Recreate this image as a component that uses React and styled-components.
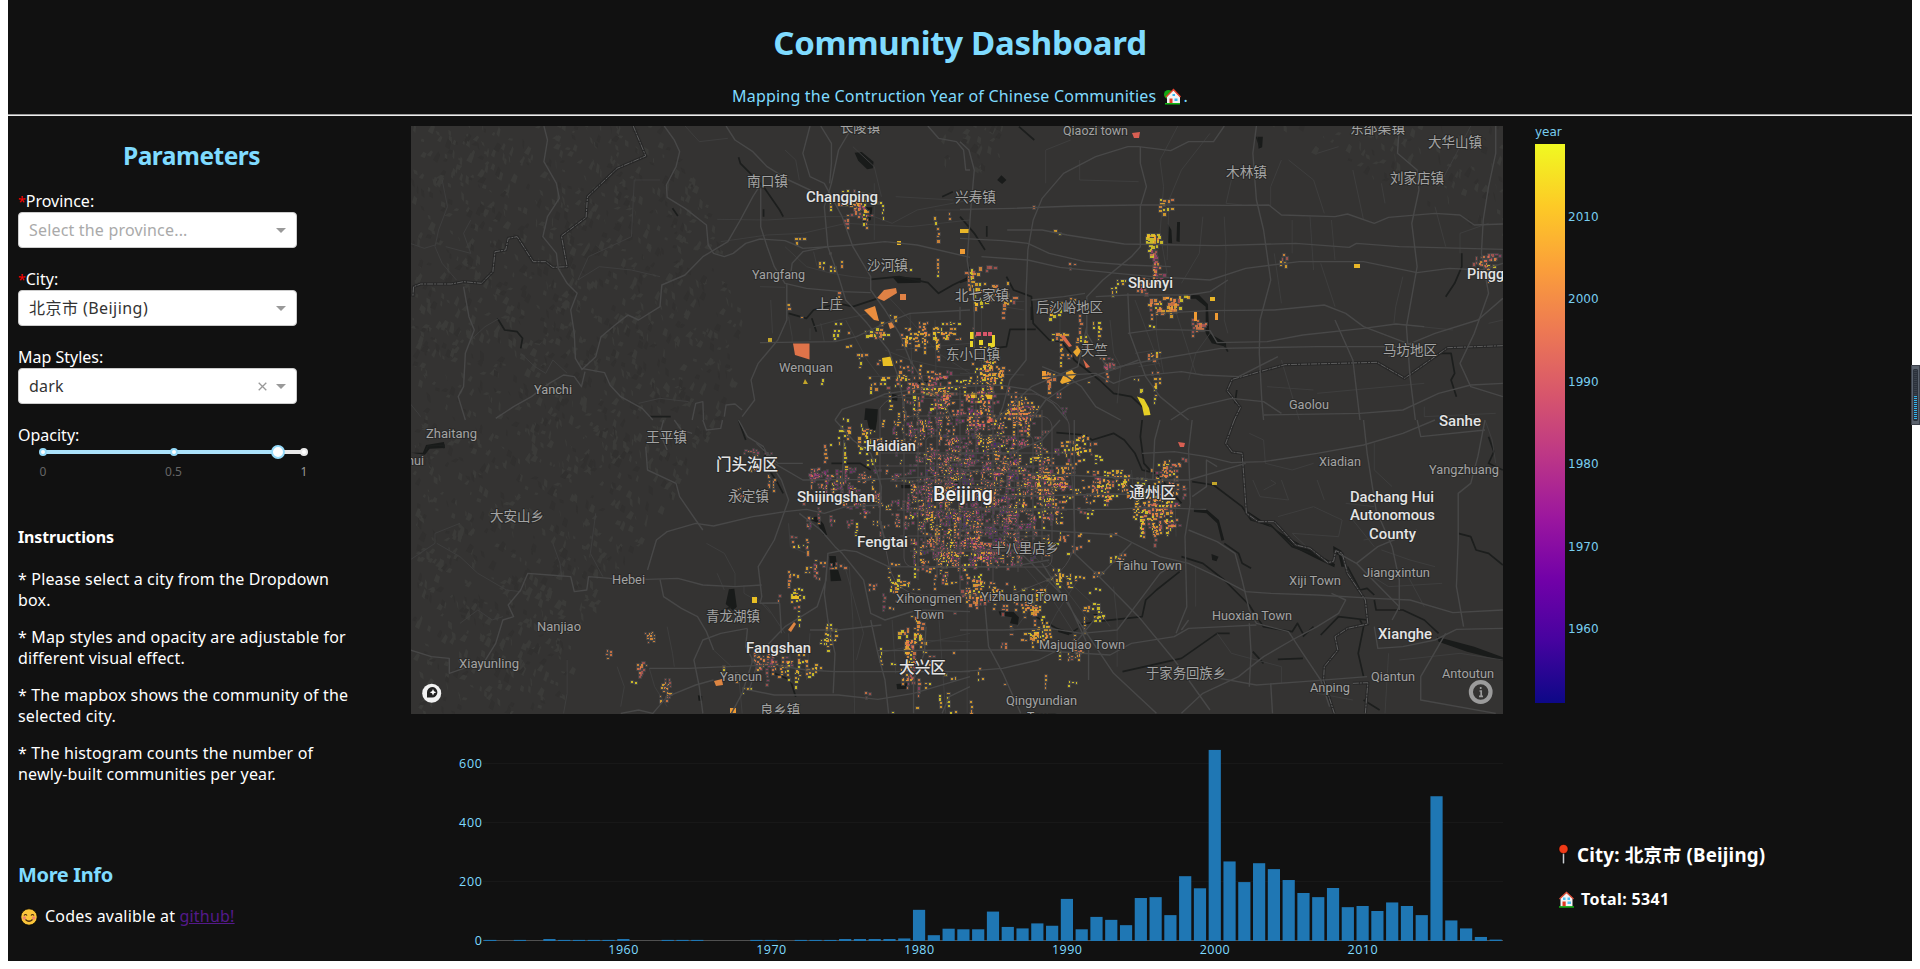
import React from "react";
import styled, { createGlobalStyle } from "styled-components";

const UI_FONT = '"Noto Sans", "Open Sans", "Noto Sans CJK SC", sans-serif';
const ACCENT = "#7fdbff";

const GlobalStyle = createGlobalStyle`
  *, *::before, *::after { box-sizing: border-box; }
  html, body { margin: 0; padding: 0; background: #fff; overflow: hidden; }
  body { font-family: ${UI_FONT}; font-size: 16px; line-height: 21px; color: #fff; }
  h1, h2, h3, h4, p { margin: 0; white-space: nowrap; }
`;

/* ---------- layout ---------- */
const Page = styled.div`
  position: relative;
  width: 1920px;
  height: 969px;
  padding: 0 8px 8px;
  background: #fff;
`;
const Board = styled.div`
  height: 961px;
  display: flex;
  flex-direction: column;
  background: #111;
`;
const Header = styled.header`
  height: 116px;
  flex: none;
  display: flex;
  flex-direction: column;
  align-items: center;
  padding-top: 21px;
  border-bottom: 1px solid #eee;
  box-shadow: inset 0 -1px 0 #9a9a9a;
  color: ${ACCENT};
`;
const Title = styled.h1`
  font-size: 33px;
  line-height: 43px;
  letter-spacing: -0.28px;
`;
const Subtitle = styled.p`
  display: flex;
  align-items: center;
  margin-top: 22px;
  letter-spacing: 0.21px;
  svg { margin: 0 2px 0 8px; }
`;
const Body = styled.main`
  flex: 1;
  display: grid;
  grid-template-columns: 403px 1092px 1fr;
`;
const Sidebar = styled.aside`
  padding: 24px 46px 0 10px;
  display: flex;
  flex-direction: column;
`;
const Center = styled.section`
  padding-top: 10px;
`;
const Right = styled.section`
  padding: 8px 0 0 32px;
  display: flex;
  flex-direction: column;
`;

/* ---------- sidebar ---------- */
const PanelTitle = styled.h2`
  font-size: 24.500px;
  line-height: 32px;
  text-align: center;
  color: ${ACCENT};
  letter-spacing: -0.500px;
`;
const Field = styled.div`
  margin-top: ${(p) => p.$top || 21}px;
`;
const Label = styled.div`
  line-height: 21px;
`;
const Required = styled.span`
  color: #f00;
  font-size: 14px;
`;
const Select = styled.div`
  width: 279px;
  height: 36px;
  display: flex;
  align-items: center;
  padding: 0 10px;
  border: 1px solid #ccc;
  border-radius: 4px;
  background: #fff;
  color: ${(p) => (p.$placeholder ? "#aaa" : "#333")};
  line-height: 34px;
`;
const SelectValue = styled.span`
  flex: 1;
  letter-spacing: ${(p) => p.$ls || 0.180}px;
`;
const Clear = styled.svg`
  width: 9px;
  height: 9px;
  margin-right: 9px;
`;
const Caret = styled.span`
  border: 5px solid transparent;
  border-top-color: #999;
  border-bottom-width: 0;
`;
const Slider = styled.svg`
  display: block;
  width: 310px;
  height: 40px;
  margin-top: -2px;
`;
const Subheading = styled.h4`
  margin-top: 43px;
  font-size: 16px;
  letter-spacing: -0.150px;
`;
const Para = styled.p`
  margin-top: ${(p) => p.$top || 16}px;
  letter-spacing: 0.160px;
`;
const InfoTitle = styled.h3`
  margin-top: 77px;
  font-size: 20px;
  line-height: 26px;
  color: ${ACCENT};
  letter-spacing: -0.350px;
`;
const Inline = styled.p`
  display: flex;
  align-items: center;
  margin-top: 18px;
  white-space: pre;
  letter-spacing: 0.200px;
  svg { margin: 0 7px 0 2px; }
`;
const Link = styled.a`
  color: #551a8b;
  text-decoration: underline;
`;

/* ---------- map and charts ---------- */
const MapView = styled.svg`
  display: block;
  width: 1092px;
  height: 588px;
  background: #343332;
`;
const Chart = styled.svg`
  display: block;
  width: 1092px;
  height: 247px;
`;
const Legend = styled.div`
  width: 30px;
  font: 12px/16px "DejaVu Sans", sans-serif;
  color: #78cdef;
`;
const LegendRow = styled.div`
  display: flex;
  margin-top: 4px;
`;
const Ramp = styled.div`
  flex: none;
  width: 30px;
  height: 559px;
  background: linear-gradient(to top, #0d0887 0%, #46039f 11.1%, #7201a8 22.2%, #9c179e 33.3%,
    #bd3786 44.4%, #d8576b 55.6%, #ed7953 66.7%, #fb9f3a 77.8%, #fdca26 88.9%, #f0f921 100%);
`;
const Ticks = styled.div`
  display: flex;
  flex-direction: column;
  gap: 66.400px;
  padding: 65px 0 0 3px;
  font-size: 12px;
`;
const Stats = styled.div`
  padding: 139px 0 0 23px;
  font-weight: 700;
`;
const Stat = styled.div`
  display: flex;
  align-items: center;
  height: 25px;
  margin-bottom: 20px;
  font-size: ${(p) => p.$size}px;
  letter-spacing: ${(p) => p.$ls || 0}px;
  white-space: nowrap;
  svg { margin-right: ${(p) => p.$gap}px; }
`;
const SideWidget = styled.div`
  position: absolute;
  right: 0;
  top: 365px;
  width: 9px;
  height: 60px;
  padding: 3px 1px;
  border: 1px solid #3c414b;
  background: #5a626d;
`;
const Meter = styled.div`
  height: 100%;
  border-radius: 1px;
  border: 1px solid #2c323c;
  background: repeating-linear-gradient(#0000 0 1px, #2c323c 1px 2px),
    linear-gradient(#3b424c 50%, #33b4ea 50%);
`;

/* ---------- icons ---------- */
const House = () => (
  <svg width="17" height="17" viewBox="0 0 17 17">
    <circle cx="4.5" cy="6.5" r="4.5" fill="#16a813" />
    <path d="M3 8.5 9.5 2 16 8.5V15.5H3Z" fill="#f2f2f2" />
    <path d="M2 9 9.5 1.5 16.5 9" fill="none" stroke="#e8412c" strokeWidth="1.4" />
    <path d="M5.5 10.5h3V15.500h-3z" fill="#e33a24" />
    <path d="M10.500 10.500h3v2.500h-3zM8.500 6h2.500v2h-2.500z" fill="#38b6ee" />
    <path d="M1 15h15v1.500H1z" fill="#14b815" />
  </svg>
);
const FrontHouse = () => (
  <svg width="17" height="17" viewBox="0 0 17 17">
    <path d="M2.500 7.500 8.500 2 14.500 7.500V15.500h-12Z" fill="#f4f4f4" />
    <path d="M1.500 8 8.500 1.300 15.500 8" fill="none" stroke="#e8553f" strokeWidth="1.300" />
    <path d="M4.500 10.500h3.200V15.500H4.500z" fill="#e33a24" />
    <path d="M9.500 10.500h3.500V13H9.500zM5 6.500h2.500V9H5zM9.500 6.500H12V9H9.500z" fill="#4fc3f3" />
    <path d="M1 15.200h15v1.500H1z" fill="#14b815" />
  </svg>
);
const Pin = () => (
  <svg width="11" height="22" viewBox="0 0 11 22">
    <path d="M5.500 8V20" stroke="#000" strokeWidth="3.500" />
    <path d="M5.500 8V19.500" stroke="#c9ced2" strokeWidth="1.600" />
    <circle cx="5.500" cy="5" r="4.600" fill="#f03a17" stroke="#000" strokeWidth=".6" />
  </svg>
);
const Smile = () => (
  <svg width="18" height="18" viewBox="0 0 18 18">
    <circle cx="9" cy="9" r="8.200" fill="#fbc53a" stroke="#000" strokeWidth=".8" />
    <circle cx="4.300" cy="10" r="1.700" fill="#f3866a" />
    <circle cx="13.700" cy="10" r="1.700" fill="#f3866a" />
    <path d="M4 7.500q1.500-2 3 0M11 7.500q1.500-2 3 0M5.500 11.500q3.500 3.500 7 0" fill="none" stroke="#4a2a10" strokeWidth="1.200" />
  </svg>
);

/* ---------- map data ---------- */
// The map is drawn as four tiles; every tile stores its lines in tile units.
const TILES = [
  {
    at: [410, 120],
    major: [
      "M712 18 740 60 755 95 745 140 718 195 720 232 770 265 830 315 835 375 850 400 880 410 905 400 940 370 980 357 1050 362 1080 375 1100 385 1240 375 1330 365 1420 375 1568 412",
      "M375 18 385 60 375 125 410 190 418 235 385 290 372 350 410 400 415 445 440 490 468 520 450 570 460 640 463 715 480 745 545 758 560 795 590 830 650 865 680 900",
      "M480 750 520 710 535 650 580 610 610 585 640 600 700 560 705 495 770 465 820 410 890 365 925 300 960 230 978 200",
      "M982 205 982 320 1000 380 1020 440 1050 490 1110 505 1210 515 1290 518",
      "M1055 490 1055 600 1030 660 975 730 955 780 965 840 930 890",
      "M980 668 1190 665 1250 650 1330 610 1400 580 1568 570",
      "M1120 18 1100 100 1120 170 1160 190 1210 290 1240 380 1290 470 1290 510 1330 570 1370 640 1400 720 1440 790 1500 860 1520 900",
      "M885 18 910 60 960 95 1000 140 1060 180 1120 210 1160 240",
      "M1150 18 1180 70 1180 130 1175 190M1240 18 1200 90 1180 190 1160 260 1170 380 1200 470 1220 540 1280 610 1340 690 1370 780 1390 900",
      "M1065 470 1070 430 1100 395 1170 380",
      "M1568 798 1460 800 1390 812 1330 822 1290 840 1210 868 1190 900",
      "M240 895 290 860 340 830 390 790 430 765 460 770 480 800 490 755",
      "M150 500 165 590 180 630 155 700 150 800 135 830 155 900",
      "M790 900 800 850 820 845 822 900M880 890 885 855 910 852 930 870",
      "M1450 18 1480 55 1530 65 1550 90 1556 150 1568 150",
    ],
    minor: [
      "M90 180 105 260 80 330 70 380 90 430 130 480M0 370 40 385 70 375",
      "M470 480 500 410 560 380 620 350 628 180 700 180M470 480 530 440 620 450 700 470",
      "M170 300 150 340 170 400 100 380M0 160 0 150",
      "M170 660 210 620 250 595M310 700 350 740 380 760 400 720 440 760",
      "M860 298 1000 300 1160 290 1300 290 1350 310 1420 270 1568 240",
      "M870 365 1000 345 1100 340 1220 310 1400 320 1568 300",
      "M980 500 1050 502M1010 540 1015 640M1120 625 1120 660M1150 610 1160 665",
      "M1060 590 1070 650 1070 668M1130 620 1200 600 1290 580",
      "M1220 600 1280 720 1330 790M1330 690 1400 720 1480 740 1568 750",
      "M1050 380 1110 440 1180 460 1240 470 1290 475M1130 395 1140 440",
      "M1050 90 1080 120 1090 180M1240 80 1300 140 1320 230M770 18 810 65 890 55",
      "M1300 190 1300 360M1360 230 1520 240M1470 270 1568 270",
      "M1330 520 1400 600 1480 700 1568 760M1400 580 1410 900M1470 600 1475 900",
      "M640 850 700 835 780 845M0 850 30 890",
      "M1280 770 1568 765M1310 830 1568 840M1360 690 1568 670",
    ],
    water: [
      "M920 112 925 130 990 200 1035 270 1045 290M990 268 990 290M735 265 750 288",
      "M1290 478 1370 470 1450 488 1480 520 1520 495 1568 470",
      "M1060 580 1110 595 1130 570 1200 550 1240 560 1310 535M1125 595 1138 635",
      "M245 595 265 630 300 635 315 655 310 685M1420 790 1510 775M670 890 730 890",
      "M1490 230 1520 215",
    ],
    lakes: [
      "M1245 98 1265 96 1298 125 1296 145 1280 148 1255 122Z",
      "M1272 262 1295 262 1290 300 1268 308Z",
      "M1350 470 1430 474 1430 488 1366 490Z",
      "M1275 865 1310 868 1308 900 1272 900Z",
      "M1350 822 1366 825 1364 842 1350 840Z",
    ],
    border: ["M625 18 660 108 580 145 497 230 493 292 424 348 440 440 400 442 380 425 345 425 300 350 275 355 268 390 238 395 232 455 200 490 150 485 115 492 30 492 10 500 8 530"],
  },
  {
    at: [960, 120],
    major: [
      "M0 268 150 265 320 258 500 255 590 255 750 256 865 255 900 285 1050 290 1085 282 1160 310 1200 292 1330 280 1400 285 1440 315 1520 312",
      "M132 330 230 330 300 345 460 372 720 377 940 370 1090 382 1110 370 1230 380 1520 388",
      "M0 355 120 362 190 370 250 400 350 425 470 435 590 440",
      "M60 410 190 420 280 442 440 460 540 470 700 480 800 445 950 425 1130 425 1280 458 1370 445 1460 450 1520 430",
      "M740 18 710 65 640 65 590 92 500 80 470 80 380 110 290 160 230 235 205 300 190 390 185 520 185 720 140 780 120 860 105 900",
      "M505 80 505 130 522 200 505 260 505 380 480 410 400 480 355 530 355 640 410 740",
      "M830 18 820 100 830 240 850 330 870 480 840 600 838 700 845 840 850 900",
      "M0 600 0 560M380 530 470 525 640 525 700 515 750 480",
      "M470 640 550 628 700 632 720 668 860 665 960 645 1130 625 1220 612 1300 620",
      "M200 540 290 530 350 520M545 580 700 572 880 570 1020 555 1080 580 1130 620 1240 665 1300 690",
      "M1520 535 1450 600 1330 640 1240 680 1200 710M890 710 780 770 680 765 620 755 480 770 430 790 380 760 230 770",
      "M420 745 540 720 730 685 1000 680 1240 680",
      "M1230 18 1225 100 1280 150 1285 210 1265 310 1280 440 1250 620 1260 770 1275 900",
      "M1500 18 1500 100 1480 200 1465 300 1460 400 1480 520 1440 640 1400 730 1430 800 1520 830",
      "M1050 600 1100 720 1120 900M0 800 110 795 200 810 260 850 300 900",
      "M1520 790 1430 795 1340 820 1240 870 1120 880 850 885M590 900 640 865 760 835 850 845 900 880",
      "M470 520 475 640 520 770 560 830 640 900M0 65 25 90 40 150 30 270 20 420 40 560 40 700",
      "M100 900 200 800 330 740 355 620M450 900 380 860 340 800 300 770 230 740",
      "M200 900 240 840 310 790 440 745 500 720",
    ],
    minor: [
      "M240 190 240 90 310 60M335 120 335 180 500 185M900 120 870 200 870 260",
      "M610 18 560 120 570 200 560 340 580 460M700 40 620 150 585 240 580 420M550 560 550 640 570 760",
      "M680 290 670 400 620 490M760 180 745 250 790 255M740 290 745 400 740 600 750 640",
      "M980 290 990 450M930 300 930 400M1040 300 1050 420M880 400 900 550M1010 430 1050 560",
      "M920 120 990 180 1020 280M1060 80 1000 100M1100 150 1130 300M1330 260 1360 380",
      "M1240 470 1220 560 1215 610M1220 612 1380 630M1400 400 1400 340 1480 310",
      "M640 780 660 700 700 640M540 720 560 770M600 560 660 760M490 540 560 740",
      "M1000 820 1300 790M900 720 950 900M860 800 990 810M1300 860 1300 890 1500 880",
      "M280 560 280 640M420 600 430 700 450 740 440 850M490 700 550 690M500 740 560 730",
      "M0 700 100 700M60 560 60 800M0 760 180 765M0 540 180 545M100 500 120 560 180 570",
      "M1430 18 1390 100 1340 200M1520 600 1480 610M1180 190 1190 250",
    ],
    water: [
      "M0 290 40 340 70 390M75 318 75 350M130 470 150 510 200 530 205 610 250 660 285 665 310 700 320 720 390 780 430 820 480 830 520 870",
      "M165 20 208 60M830 50 840 80M200 600 200 560M212 628 140 628 130 680 90 685",
      "M1405 400 1405 440 1385 490 1360 530M1340 700 1375 700 1385 760 1375 780 1390 830",
      "M740 675 750 695M775 810 770 850M0 487 20 480 25 440",
    ],
    lakes: [
      "M622 524 670 526 694 552 698 640 745 668 745 680 705 670 688 640 688 560 660 536 630 536Z",
      "M582 312 592 330 594 370 580 368ZM608 306 616 306 615 366 606 364Z",
      "M104 180 116 166 130 180 118 192ZM834 50 848 50 846 82 836 86Z",
    ],
    border: ["M1520 677 1365 683 1245 775 1168 727 910 734 762 778 748 812 785 862 768 900"],
  },
  {
    at: [410, 420],
    major: [
      "M0 690 60 710 110 715 110 760 150 745 200 740 240 670 260 600 290 590 275 555 310 510 330 460 390 465 450 470 460 515 495 510 500 470 560 475 665 478 750 475 820 495 910 500 985 495",
      "M665 450 690 360 720 335 800 310 850 318 960 290 1050 275 1110 268 1160 280 1220 260 1320 255",
      "M700 478 710 530 760 565 805 590 830 635 850 690",
      "M660 80 665 150 745 190 755 230 800 300 820 330",
      "M920 0 945 50 990 80 1010 130 1040 180 1060 240 1045 285 1020 360 975 440 985 530 980 550 1035 550 1040 640",
      "M945 625 870 640 820 660 795 720 810 800 820 880M945 625 940 680 970 740 950 810 1020 825 1200 825 1310 838 1410 820 1568 770",
      "M980 550 1035 548M1090 280 1150 330 1190 380 1210 400 1270 480 1290 580 1330 600 1420 570 1568 575",
      "M1170 410 1160 520 1170 600 1190 700 1185 820M1215 390 1170 400 1165 480 1140 560 1050 620 960 720 930 820 900 880",
      "M1020 130 1100 180 1300 178 1568 165M970 70 1030 130 1100 130",
      "M1290 600 1310 700 1330 780 1340 880M1120 630 1200 630 1320 615",
      "M670 745 780 745 890 740 1020 735 1110 750 1190 755 1568 755",
      "M590 880 640 870 680 880 720 830 800 795 850 780M1568 690 1310 692",
      "M1190 0 1240 60 1290 100 1320 200 1315 300 1330 360M1568 442 1340 440 1250 395 1215 390",
      "M1205 250 1210 200 1215 60M1490 880 1510 830 1568 800M820 0 830 30 870 25 875 0",
      "M710 0 700 40 720 90M740 0 760 30 790 40M1410 880 1410 780 1440 700 1445 620",
    ],
    minor: [
      "M0 420 70 370 70 340 140 310M75 370 140 410 190 460 270 510 310 515",
      "M520 280 505 400 540 470M400 370 420 430 425 470M140 610 190 570 230 600 260 590",
      "M830 370 880 400 910 460 910 500M880 510 860 460M935 495 935 520 1000 560 1050 640",
      "M670 745 685 800 720 860M720 620 735 700 740 740M1060 640 1065 740 1100 760",
      "M850 690 900 740M580 740 600 800 590 860M440 720 440 820 430 880",
      "M1060 310 1065 380 1110 400M1230 440 1240 600 1245 880M1215 430 1270 640 1250 720",
      "M1000 680 1040 700 1070 790M1120 640 1110 780M920 760 930 880M960 520 1010 580",
      "M1310 700 1568 640M1350 600 1360 760M1480 580 1500 880M1400 660 1568 665",
    ],
    water: [
      "M990 80 1000 140 1030 190 1045 220M920 0 940 60M1180 130 1260 130 1290 150",
      "M1010 755 1065 780 1080 830M45 90 50 78 95 75 95 85M870 575 900 560",
    ],
    lakes: [
      "M1120 292 1140 290 1158 312 1168 345 1158 345 1140 308 1122 300Z",
      "M1174 408 1192 408 1196 440 1208 482 1178 484Z",
      "M893 508 908 506 915 560 905 572 884 552Z",
      "M1280 0 1308 0 1302 40 1286 30Z",
      "M1375 195 1405 195 1400 205 1376 205ZM1362 792 1392 790 1390 806 1364 808ZM1448 355 1478 352 1478 366 1450 368ZM806 826 818 828 818 842 808 842ZM1522 156 1536 156 1536 178 1532 200 1524 198Z",
      "M0 98 36 98 45 75 95 66 98 84 55 86 42 104Z",
    ],
    border: [],
  },
  {
    at: [960, 420],
    major: [
      "M0 330 220 330 440 345 560 410 640 430 720 470 800 515 870 520 1000 525 1160 535 1260 540 1380 578 1520 570",
      "M0 265 320 268 440 268 520 262 690 268M0 225 200 228 430 222 560 225",
      "M650 0 640 90 645 250 630 350 635 560 605 640",
      "M640 330 720 365 770 400 790 480 810 570 830 610 920 635 960 700 1010 780 1035 860",
      "M510 100 600 95 690 110 760 128 850 125 1000 100 1130 75 1240 40 1330 0",
      "M1130 0 1140 100 1165 270 1210 380 1230 480 1230 570",
      "M1060 400 1110 430 1170 380 1280 330M1210 600 1230 560 1110 430",
      "M1520 625 1390 628 1330 660 1240 680 1170 685 1160 620",
      "M1280 0 1290 50 1470 30M1470 0 1450 110 1430 190 1395 220 1395 360 1390 500 1410 620",
      "M320 0 320 270 320 400 390 470 500 590 600 720 700 870",
      "M0 690 200 690 420 705 480 670 600 650 640 625 740 620 830 615",
      "M0 630 120 630 250 625 340 640 440 630 490 560 560 460 600 430",
      "M0 755 120 745 220 720 330 660 390 580",
      "M620 880 680 820 780 770 850 710 930 660 1000 620 1060 580 1080 540 1040 520",
      "M230 430 330 600 430 760 550 880M110 340 200 430 300 540 360 680 360 780",
      "M70 560 80 680 120 760 170 880M700 770 830 795 960 785 1140 770",
      "M0 200 280 205M0 150 300 165 560 180 640 180 800 130",
      "M720 140 690 120 690 200 650 230M810 610 815 700 810 800",
      "M560 0 545 60 540 180M0 100 140 100 230 60 280 0",
      "M870 790 875 880M1360 640 1290 770 1290 840 1500 880",
      "M640 600 620 630M390 470 480 370M0 440 140 440 250 420",
    ],
    minor: [
      "M810 40 850 60 855 130 930 150 990 130M820 180 840 230 920 240 900 180M850 210 885 190 870 180",
      "M890 290 990 260 1070 300 1060 350 930 340 970 380M1000 180 1020 240M1080 250 1160 260",
      "M1160 70 1160 150 1210 200M1130 360 1240 340M1140 460 1200 500 1350 490",
      "M1180 390 1260 420 1330 440M1240 440 1300 560M1470 0 1490 60 1500 130",
      "M720 640 760 700 900 740 900 790M660 440 660 560M440 740 440 600 430 500",
      "M0 310 140 310M60 200 60 440M110 160 110 320M150 120 160 440M200 160 205 330",
      "M270 460 200 560 160 620M330 480 270 580 220 680M240 420 380 560 420 620",
      "M1200 700 1190 880M1230 720 1400 700 1520 720M1000 820 1100 840",
      "M180 440 260 540 320 640M200 400 290 500 360 600M20 440 20 880M1100 300 1160 380",
      "M480 150 490 260M520 150 520 340M560 180 570 340M600 140 605 350M450 200 640 205",
    ],
    water: [
      "M270 38 350 45 370 60 430 40 460 60 490 100 510 150 550 160 620 250",
      "M650 185 710 195 790 260 815 300 870 315 930 380 1000 405",
      "M620 410 680 430 740 480 810 555 830 590 850 620 930 635 945 610 960 640M1010 645 1060 590 1140 600",
      "M740 370 780 400 790 430 815 445M615 455 550 510 520 540 510 590 380 605 330 615",
      "M180 560 220 595 270 625 310 640 330 625M455 755 620 715 720 640 755 640",
      "M1160 540 1165 570 1240 570 1300 600 1340 640",
      "M1395 340 1430 350 1445 390 1480 400 1520 435M1480 50 1495 95 1480 130 1520 150",
      "M1120 600 1130 620 1115 700 1130 770M1085 440 1120 510 1140 505 1160 525M1130 840 1175 870",
      "M510 0 505 50 515 130 540 160M890 718 960 715M820 695 850 730M960 650 990 620",
    ],
    lakes: [
      "M655 264 690 268 725 300 740 360 732 362 720 310 690 280 655 276Z",
      "M800 270 850 305 900 340 980 390 1050 432 1048 442 990 412 940 385 880 325 840 310 800 282Z",
      "M1045 378 1068 392 1080 440 1068 440 1060 405 1046 400Z",
      "M1335 650 1440 680 1520 712 1520 722 1420 695 1340 665Z",
      "M108 574 150 576 165 592 162 614 140 610 145 592 112 586Z",
      "M374 582 386 582 386 600 374 600ZM704 402 724 410 718 424 706 420Z",
      "M275 628 310 636 305 646 275 636Z",
    ],
    border: ["M768 0 744 70 762 96 790 100 802 280 835 305 880 305 940 375 980 385 1030 428 1046 424 1052 392 1070 400 1085 460 1135 540 1142 612 1085 625 1050 650 1058 690 1020 740 1018 780 1048 880M1100 790 1142 788 1135 880"],
  },
];

// Ring roads and the street grid of the central city, in map units.
const STREETS = [
  "M948 461h60v64h-60zM926 440q2-4 6-4h96q5 0 5 5v104q0 5-5 5h-98q-5 0-5-5zM904 424q0-6 8-8h128q10 0 12 10v132q0 9-9 9h-129q-9 0-10-9z",
  "M880 408q10-14 30-14h125q28 6 34 30l6 110q0 30-25 45l-40 16h-90q-22-2-30-25l-10-50z",
  "M880 453h190M876 466h195M890 481h180M897 510h170M900 536h150M910 551h140",
  "M918 400v180M937 400v178M960 390v200M976 380v84M993 386v196M1018 400v172M1042 410v150",
];

const YEARS = ["#f3e125", "#fbb62c", "#f79a38", "#ee8146", "#dd645c", "#c24878", "#9a2d88", "#5b1aa0"];

// [centre x, centre y, spread x, spread y, count, newest tone, oldest tone, block size]
const CLUSTERS = [
  [965, 462, 56, 48, 640, 1, 7, 1.5], [978, 520, 62, 42, 620, 1, 7, 1.5],
  [925, 495, 44, 52, 400, 0, 6, 1.5], [1020, 480, 38, 40, 380, 0, 6, 1.5],
  [985, 548, 42, 18, 240, 1, 6, 1.6], [945, 550, 32, 18, 140, 0, 6, 1.7],
  [977, 405, 16, 26, 150, 0, 6, 1.8], [1016, 412, 17, 17, 140, 1, 5, 1.8], [925, 420, 40, 20, 150, 1, 6, 1.6],
  [925, 378, 28, 16, 110, 0, 5, 1.9], [940, 398, 16, 12, 60, 0, 5, 1.8], [928, 332, 28, 12, 100, 0, 3, 2],
  [985, 370, 14, 14, 90, 0, 4, 2], [878, 370, 18, 18, 34, 0, 4, 2], [875, 335, 26, 16, 24, 0, 3, 2.2],
  [1155, 512, 20, 20, 190, 0, 5, 1.9], [1168, 472, 14, 20, 70, 0, 5, 1.9],
  [1108, 484, 26, 14, 120, 0, 5, 1.9], [1045, 475, 20, 22, 130, 0, 5, 1.9],
  [1060, 505, 32, 28, 70, 0, 5, 1.8], [1075, 447, 18, 11, 46, 0, 3, 2],
  [845, 478, 28, 12, 90, 1, 6, 1.7], [815, 474, 14, 6, 44, 3, 6, 1.7],
  [755, 465, 18, 24, 44, 2, 5, 1.7], [852, 437, 30, 20, 66, 0, 3, 2.1],
  [850, 500, 44, 28, 100, 0, 6, 1.7], [850, 203, 28, 16, 74, 0, 5, 2],
  [1153, 237, 9, 8, 30, 0, 2, 2.8], [1156, 262, 5, 11, 18, 2, 5, 2.5], [1163, 199, 5, 12, 12, 0, 3, 2.4],
  [1163, 300, 16, 9, 44, 0, 4, 2.6], [1145, 282, 14, 8, 22, 3, 5, 2.2],
  [1197, 320, 5, 10, 18, 2, 4, 2.5], [976, 275, 11, 22, 44, 0, 4, 2.6], [1000, 293, 14, 14, 26, 1, 5, 2.3],
  [1064, 325, 26, 32, 50, 0, 3, 2.3], [1105, 363, 6, 6, 20, 3, 5, 1.8], [1047, 376, 6, 7, 14, 1, 3, 2.5],
  [1485, 260, 13, 8, 34, 0, 5, 1.9], [1280, 256, 6, 5, 7, 1, 4, 2.3],
  [770, 658, 16, 9, 66, 1, 5, 1.8], [800, 662, 17, 13, 44, 0, 2, 1.9],
  [792, 590, 18, 18, 30, 0, 5, 2], [826, 633, 7, 9, 26, 0, 2, 1.9],
  [912, 634, 15, 18, 70, 0, 4, 2.2], [915, 672, 18, 18, 50, 0, 5, 1.9],
  [980, 590, 26, 16, 90, 0, 4, 1.9], [1033, 605, 16, 16, 60, 0, 3, 2],
  [1058, 575, 16, 7, 30, 0, 2, 2], [1033, 632, 12, 8, 38, 0, 2, 2],
  [1073, 646, 6, 11, 34, 1, 4, 1.6], [1090, 600, 12, 28, 30, 0, 2, 2],
  [890, 582, 16, 7, 22, 0, 2, 2], [820, 565, 22, 16, 26, 1, 5, 1.8], [800, 540, 26, 10, 14, 0, 4, 1.8],
  [650, 635, 5, 4, 16, 2, 4, 1.7], [640, 666, 8, 5, 14, 2, 4, 1.8], [663, 687, 4, 18, 26, 1, 4, 1.7],
  [940, 580, 64, 20, 70, 0, 5, 1.8], [1000, 440, 76, 70, 150, 0, 6, 1.5], [1085, 545, 40, 16, 28, 0, 3, 2.2],
  [960, 690, 60, 26, 24, 0, 2, 2], [960, 650, 120, 66, 36, 0, 4, 1.8],
  [1060, 280, 110, 80, 40, 0, 4, 2], [835, 300, 70, 90, 44, 0, 3, 2], [1150, 365, 18, 44, 28, 0, 3, 2.1],
  [775, 660, 150, 50, 20, 0, 3, 1.8], [900, 250, 60, 50, 16, 0, 4, 2],
];

const BLOCKS = [
  ["#df7349", "M793 343.500H809.500V359.500L795 355Z"],
  ["#df8145", "M877 298 884 290 896 288 897 293 884 301ZM900 294h6v6h-6z"],
  ["#ea8d3e", "M864 310 875 306 879 321 874 320Z"],
  ["#e9bf24", "M882 358 891 356.500 893 366 883 366ZM752 597h5v6h-5zM792 596h7v3h-7z"],
  ["#e6cf25", "M1137 396.500 1144 399 1149 408 1150.500 415 1144 415.500 1142 406Z"],
  ["#eda82f", "M1060 382 1063 376 1066 376 1066 371 1072 370 1074 373 1077 374 1071 381 1062 384ZM1073 352 1078 347 1081 351 1077 357Z"],
  ["#db6a4b", "M1060 336 1064 335 1072 346 1069 347ZM1083 359 1090 367 1086 368Z"],
  ["#dd8542", "M788 630 794 622 796 624 791 632ZM714 681 722 679 723 685 716 686ZM888 323 893 322 895 327 890 329Z"],
  ["#e8d428", "M970 332h4v7h-4zM970 341h3v6h-3zM992 335h3v12h-3zM979 340h4v5h-4zM988 343h5v5h-5z"],
  ["#d9566a", "M976 332h5v4h-5zM983 332h4v4h-4zM988 332h4v4h-4z"],
  ["#d95f52", "M1132 133 1140 132 1139 138 1134 138ZM1178 442 1185 443 1184 447 1180 447ZM988 419 993 418 994 422 989 422Z"],
  ["#ee9a33", "M730 708h6v5h-6zM960 249h5v5h-5zM1194 312h3v9h-3zM1215 313h3v7h-3zM1042 371h4v8h-4z"],
  ["#e9b628", "M960 229h9v4h-9zM1210 297h5v4h-5zM971 393h6v5h-6zM986 394 993 395 992 399 987 399ZM897 241h4v4h-4zM1354 264h6v4h-6z"],
  ["#c3a52a", "M805 379 808 384 803 384ZM768 338h4v4h-4zM1212 482h5v3h-5zM1072 447h4v4h-4z"],
];

// [x, y, width, text, tone, font size]
const town = "#a3a3a3";
const city = "#e4e4e4";
const LABELS = [
  [840, 128, 40, "长陵镇", town, 13.500], [747, 182, 41, "南口镇", town, 13.500], [806, 197, 72, "Changping", city, 15.500],
  [955, 198, 41, "兴寿镇", town, 13.500], [867, 266, 41, "沙河镇", town, 13.500], [752, 275, 53, "Yangfang", town, 13.500],
  [816, 305, 27, "上庄", town, 13.500], [779, 368, 54, "Wenquan", town, 13.500], [534, 390, 38, "Yanchi", town, 13.500],
  [955, 296, 54, "北七家镇", town, 13.500], [946, 355, 54, "东小口镇", town, 13.500], [1063, 131, 65, "Qiaozi town", town, 13.500],
  [1350, 129, 55, "东邵渠镇", town, 13.500], [1428, 143, 54, "大华山镇", town, 13.500], [1226, 173, 41, "木林镇", town, 13.500],
  [1390, 179, 54, "刘家店镇", town, 13.500], [1128, 283, 45, "Shunyi", city, 15.500], [1036, 308, 67, "后沙峪地区", town, 13.500],
  [1081, 351, 27, "天竺", town, 13.500], [1383, 351, 54, "马坊地区", town, 13.500], [1467, 274, 45, "Pinggu", city, 15.500],
  [1289, 405, 40, "Gaolou", town, 13.500], [1439, 421, 42, "Sanhe", city, 15.500], [426, 434, 51, "Zhaitang", town, 13.500],
  [407, 461, 17, "hui", town, 13.500], [646, 438, 41, "王平镇", town, 13.500], [716, 465, 62, "门头沟区", city, 15.500],
  [728, 497, 41, "永定镇", town, 13.500], [797, 497, 78, "Shijingshan", city, 15.500], [933, 495, 60, "Beijing", "#f0f0f0", 20],
  [866, 446, 50, "Haidian", city, 15.500], [857, 542, 51, "Fengtai", city, 15.500], [490, 517, 54, "大安山乡", town, 13.500],
  [612, 580, 33, "Hebei", town, 13.500], [896, 599, 66, "Xihongmen", town, 13.500], [914, 615, 30, "Town", town, 13.500],
  [706, 617, 54, "青龙湖镇", town, 13.500], [537, 627, 44, "Nanjiao", town, 13.500], [746, 648, 65, "Fangshan", city, 15.500],
  [459, 664, 60, "Xiayunling", town, 13.500], [720, 677, 42, "Yancun", town, 13.500], [899, 668, 47, "大兴区", city, 15.500],
  [760, 711, 40, "良乡镇", town, 13.500], [1319, 462, 42, "Xiadian", town, 13.500], [1429, 470, 70, "Yangzhuang", town, 13.500],
  [1129, 493, 47, "通州区", city, 15.500], [1350, 497, 84, "Dachang Hui", city, 15.500], [1350, 515.500, 85, "Autonomous", city, 15.500],
  [1369, 534, 47, "County", city, 15.500], [992, 549, 67, "十八里店乡", town, 13.500], [1116, 566, 66, "Taihu Town", town, 13.500],
  [1289, 581, 52, "Xiji Town", town, 13.500], [1363, 573, 67, "Jiangxintun", town, 13.500], [981, 597, 87, "Yizhuang Town", town, 13.500],
  [1212, 616, 80, "Huoxian Town", town, 13.500], [1039, 645, 86, "Majuqiao Town", town, 13.500], [1378, 634, 54, "Xianghe", city, 15.500],
  [1146, 674, 80, "于家务回族乡", town, 13.500], [1310, 688, 40, "Anping", town, 13.500], [1371, 677, 44, "Qiantun", town, 13.500],
  [1442, 674, 52, "Antoutun", town, 13.500], [1006, 701, 71, "Qingyundian", town, 13.500], [1027, 717, 30, "Town", town, 13.500],
];

function makeRandom(seed) {
  let s = seed;
  return () => {
    s = (s * 1664525 + 1013904223) % 4294967296;
    return s / 4294967296;
  };
}

// Parcels come in small neighbourhoods: a few aligned plots of similar age.
function buildParcels() {
  const rnd = makeRandom(7);
  const spread = () => (rnd() + rnd() - 1) * 1.25;
  const fills = YEARS.map(() => "");
  let outlines = "";
  CLUSTERS.forEach(([cx, cy, sx, sy, n, lo, hi, size]) => {
    const pitch = size > 1.75 ? 4 : 3;
    const scale = size > 1.75 ? 0.62 : 0.45;
    let left = n;
    while (left > 0) {
      const bx = Math.round(cx + spread() * sx);
      const by = Math.round(cy + spread() * sy);
      const cols = 1 + Math.floor(rnd() * 3);
      const base = Math.pow(rnd(), hi > 5 ? 0.8 : 1) * (hi - lo + 0.5);
      const group = 1 + Math.floor(rnd() * 5);
      for (let i = 0; i < group && left > 0; i++, left--) {
        const x = bx + (i % cols) * pitch + (rnd() > 0.7 ? 1 : 0);
        const y = by + Math.floor(i / cols) * pitch + (rnd() > 0.7 ? 1 : 0);
        const w = Math.max(1, Math.round(size * (scale + rnd() * 0.8)));
        const h = Math.max(1, Math.round(size * (scale + rnd() * 0.8)));
        const tone = Math.max(lo, Math.min(hi, Math.floor(lo + base + (rnd() - 0.5) * 2)));
        outlines += `M${x - 0.5} ${y - 0.5}h${w + 1}v${h + 1}h-${w + 1}z`;
        fills[tone] += `M${x} ${y}h${w}v${h}h-${w}z`;
      }
    }
  });
  return { fills, outlines };
}

function buildRelief() {
  const rnd = makeRandom(41);
  let light = "";
  let dark = "";
  const add = (x0, y0, w, h, n, test) => {
    for (let i = 0; i < n; i++) {
      const x = x0 + rnd() * w;
      const y = y0 + rnd() * h;
      if (test && !test(x, y)) continue;
      const a = (rnd() - 0.25) * 7;
      const b = 2 + rnd() * 6;
      const c = 1 + rnd() * 3;
      const d = `M${x.toFixed(1)} ${y.toFixed(1)}l${a.toFixed(1)} ${(-b).toFixed(1)} ${c.toFixed(1)} ${(b * 0.4).toFixed(1)} ${(-a * 0.6).toFixed(1)} ${b.toFixed(1)}z`;
      if (rnd() > 0.3) light += d;
      else dark += d;
    }
  };
  add(411, 126, 370, 588, 2300, (x, y) => x < 650 + 90 * Math.sin((y - 120) / 130) && x + y * 0.5 < 1010 + (y < 400 ? 0 : 50));
  add(1260, 126, 243, 110, 150, (x, y) => y < 126 + (x - 1250) * 0.45);
  add(940, 126, 60, 50, 30);
  return { light, dark };
}

const PARCELS = buildParcels();
const RELIEF = buildRelief();

const tileTransform = ([x, y]) => `translate(${x} ${y}) scale(.357143 .333333)`;

function Lines({ kind, stroke, width, dash, fill = "none" }) {
  return TILES.map((t) => (
    <g key={t.at.join()} transform={tileTransform(t.at)}>
      {t[kind].map((d) => (
        <path key={d} d={d} fill={fill} stroke={stroke} strokeWidth={width} strokeDasharray={dash} strokeLinejoin="round" vectorEffect="non-scaling-stroke" />
      ))}
    </g>
  ));
}

function CityMap() {
  return (
    <MapView viewBox="411 126 1092 588">
      <path d={RELIEF.light} fill="#3b3b39" />
      <path d={RELIEF.dark} fill="#31302f" />
      <Lines kind="lakes" fill="#191b1a" />
      <Lines kind="water" stroke="#1c1e1d" width="1.700" />
      <Lines kind="minor" stroke="#403f3f" width=".9" />
      <Lines kind="border" stroke="#272727" width="3" />
      <Lines kind="border" stroke="#5e5e5e" width="1" dash="6 1 2 1" />
      <path d={PARCELS.outlines} fill="none" stroke="#4b494a" strokeWidth="1" opacity=".75" />
      {PARCELS.fills.map((d, i) => (
        <path key={YEARS[i]} d={d} fill={YEARS[i]} opacity={i > 3 ? 0.6 : 0.76} />
      ))}
      {BLOCKS.map(([fill, d]) => (
        <path key={fill + d} d={d} fill={fill} />
      ))}
      <Lines kind="major" stroke="#484848" width="1.400" />
      {STREETS.map((d) => (
        <path key={d} d={d} fill="none" stroke="#4a4849" strokeWidth="1" />
      ))}
      {LABELS.map(([x, y, w, text, fill, size]) => (
        <text
          key={text + x}
          x={x}
          y={y + size * 0.32}
          textLength={w}
          lengthAdjust="spacingAndGlyphs"
          fontFamily='Roboto, "Noto Sans CJK SC", sans-serif'
          fontSize={size}
          fontWeight={fill === town ? 400 : 500}
          fill={fill}
          stroke="#292928"
          strokeWidth="2"
          strokeLinejoin="round"
          paintOrder="stroke"
        >
          {text}
        </text>
      ))}
      <circle cx="431.700" cy="693.200" r="9.500" fill="#f2f2f2" />
      <path d="M427 697.500v-5a5.200 5.200 0 1 1 5.200 5z" fill="#222" />
      <path d="M433 689l1 2.300 2.300 1-2.300 1-1 2.300-1-2.300-2.300-1 2.300-1z" fill="#fff" />
      <circle cx="1480.700" cy="692" r="9.800" fill="#343332" stroke="#9b9b9b" strokeWidth="4.200" />
      <path d="M1480.700 687v2M1479.500 691h1.700v5M1479 696.300h4" fill="none" stroke="#9b9b9b" strokeWidth="1.700" />
    </MapView>
  );
}

/* ---------- histogram ---------- */
const COUNTS = {
  1951: 2, 1953: 2, 1955: 5, 1956: 2, 1957: 2, 1958: 2, 1959: 2, 1960: 5, 1963: 2, 1964: 2, 1965: 2, 1969: 2, 1970: 2,
  1972: 2, 1973: 2, 1974: 2, 1975: 5, 1976: 5, 1977: 5, 1978: 5, 1979: 7, 1980: 104, 1981: 18, 1982: 40, 1983: 38,
  1984: 38, 1985: 98, 1986: 46, 1987: 41, 1988: 58, 1989: 50, 1990: 141, 1991: 38, 1992: 80, 1993: 70, 1994: 52,
  1995: 144, 1996: 147, 1997: 86, 1998: 218, 1999: 177, 2000: 646, 2001: 268, 2002: 198, 2003: 262, 2004: 242,
  2005: 205, 2006: 161, 2007: 147, 2008: 178, 2009: 113, 2010: 117, 2011: 100, 2012: 129, 2013: 117, 2014: 86,
  2015: 489, 2016: 68, 2017: 41, 2018: 12, 2019: 3,
};
const yearX = (year) => 482.900 + (year - 1950.500) * 14.785;
const countY = (n) => 940.500 - n * 0.295;

function Histogram() {
  return (
    <Chart viewBox="411 714 1092 247">
      {[200, 400, 600].map((n) => (
        <path key={n} d={`M483 ${Math.floor(countY(n)) + 0.500}H1503`} stroke="#181818" />
      ))}
      <path d="M483 940.500H1503" stroke="#505050" />
      {Object.entries(COUNTS).map(([year, n]) => (
        <rect key={year} x={yearX(+year) - 6.100} y={countY(n)} width="12.200" height={n * 0.295 + 0.500} fill="#1f77b4" />
      ))}
      <g fontFamily='"Open Sans", sans-serif' fontSize="12.500" fill={ACCENT}>
        {[0, 200, 400, 600].map((n) => (
          <text key={n} x="482" y={countY(n) + 4} textAnchor="end" textLength={n ? 23 : 7.500}>{n}</text>
        ))}
        {[1960, 1970, 1980, 1990, 2000, 2010].map((y) => (
          <text key={y} x={yearX(y)} y="953.500" textAnchor="middle" textLength="30">{y}</text>
        ))}
      </g>
    </Chart>
  );
}

function OpacitySlider() {
  return (
    <Slider viewBox="18 445 310 40">
      <path d="M43 453H304" stroke="#e9e9e9" strokeWidth="4" strokeLinecap="round" />
      <path d="M43 453H278" stroke="#abe2fb" strokeWidth="4" strokeLinecap="round" />
      <circle cx="43" cy="453" r="3" fill="#fff" stroke="#96dbfa" strokeWidth="2" />
      <circle cx="174" cy="453" r="3" fill="#fff" stroke="#96dbfa" strokeWidth="2" />
      <circle cx="304" cy="453" r="3" fill="#fff" stroke="#e9e9e9" strokeWidth="2" />
      <circle cx="278" cy="453" r="6" fill="#fff" stroke="#96dbfa" strokeWidth="2" />
      <g fontSize="12" textAnchor="middle" fill="#666">
        <text x="43" y="477">0</text>
        <text x="173.500" y="477">0.5</text>
        <text x="304" y="477" fill="#999">1</text>
      </g>
    </Slider>
  );
}

export default function App() {
  return (
    <Page>
      <GlobalStyle />
      <Board>
        <Header>
          <Title>Community Dashboard</Title>
          <Subtitle>
            Mapping the Contruction Year of Chinese Communities <House />.
          </Subtitle>
        </Header>
        <Body>
          <Sidebar>
            <PanelTitle>Parameters</PanelTitle>
            <Field $top={19}>
              <Label><Required>*</Required>Province:</Label>
              <Select $placeholder><SelectValue>Select the province...</SelectValue><Caret /></Select>
            </Field>
            <Field>
              <Label><Required>*</Required>City:</Label>
              <Select><SelectValue $ls={0.450}>北京市 (Beijing)</SelectValue><Caret /></Select>
            </Field>
            <Field>
              <Label>Map Styles:</Label>
              <Select>
                <SelectValue>dark</SelectValue>
                <Clear viewBox="0 0 9 9"><path d="M.7.7 8.300 8.300M8.300.7.7 8.300" stroke="#999" strokeWidth="1.300" /></Clear>
                <Caret />
              </Select>
            </Field>
            <Field>
              <Label>Opacity:</Label>
              <OpacitySlider />
            </Field>
            <Subheading>Instructions</Subheading>
            <Para $top={21}>* Please select a city from the Dropdown<br />box.</Para>
            <Para>* Map styles and opacity are adjustable for<br />different visual effect.</Para>
            <Para>* The mapbox shows the community of the<br />selected city.</Para>
            <Para>* The histogram counts the number of<br />newly-built communities per year.</Para>
            <InfoTitle>More Info</InfoTitle>
            <Inline><Smile />Codes avalible at <Link>github!</Link></Inline>
          </Sidebar>
          <Center>
            <CityMap />
            <Histogram />
          </Center>
          <Right>
            <Legend>
              year
              <LegendRow>
                <Ramp />
                <Ticks>
                  {[2010, 2000, 1990, 1980, 1970, 1960].map((y) => <span key={y}>{y}</span>)}
                </Ticks>
              </LegendRow>
            </Legend>
            <Stats>
              <Stat $size={18.720} $gap={8} $ls={0.200}><Pin />City: 北京市 (Beijing)</Stat>
              <Stat $size={16} $gap={6} $ls={0.350}><FrontHouse />Total: 5341</Stat>
            </Stats>
          </Right>
        </Body>
      </Board>
      <SideWidget><Meter /></SideWidget>
    </Page>
  );
}
